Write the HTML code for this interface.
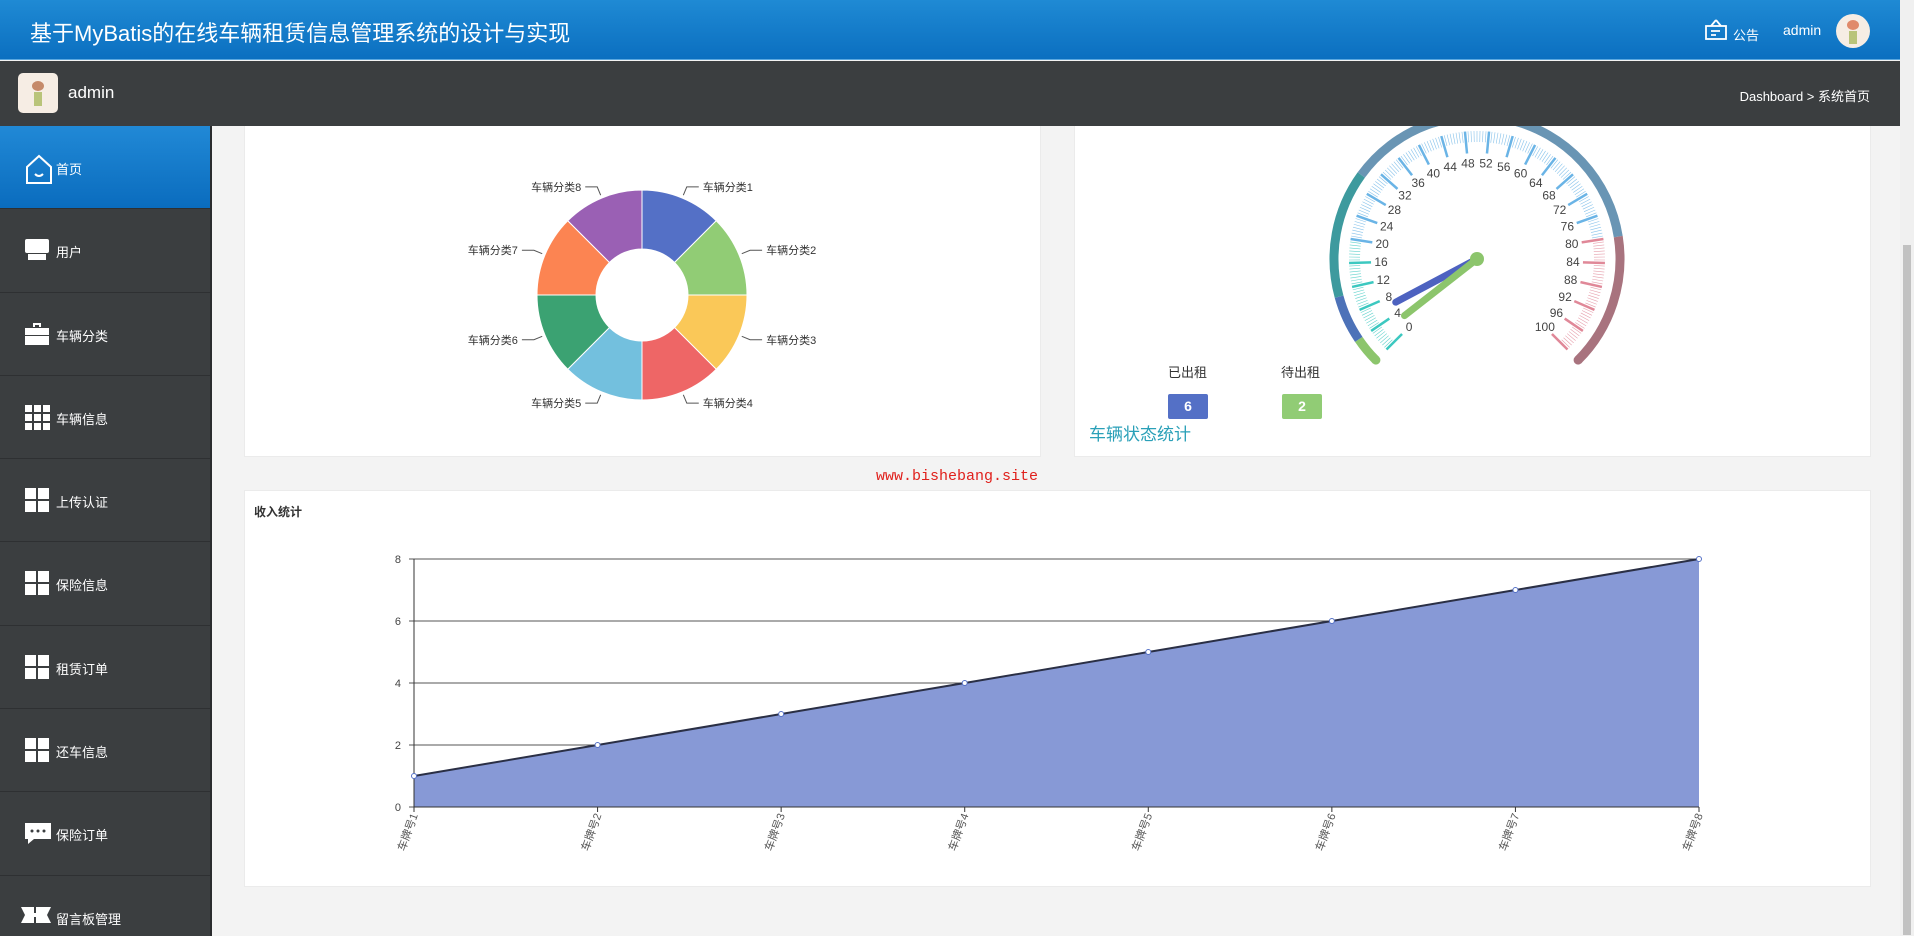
<!DOCTYPE html>
<html style="overflow:hidden;height:936px"><head><meta charset="utf-8">
<style>
*{margin:0;padding:0;box-sizing:border-box}
body{width:1914px;height:936px;overflow:hidden;background:#f3f3f3;font-family:"Liberation Sans","Noto Sans CJK SC",sans-serif;position:relative}
.top{position:absolute;left:0;top:0;width:1900px;height:60px;background:linear-gradient(#1f8ad4,#0b6fc0);border-bottom:1px solid #5aa8e0;z-index:5}
.top .t{position:absolute;left:30px;top:16px;color:#fff;font-size:22px}
.bar{position:absolute;left:0;top:61px;width:1900px;height:65px;background:#3b3e40;z-index:5}
.side{position:absolute;left:0;top:126px;width:212px;height:810px;overflow:hidden;background:#3b3e40;border-right:2px solid #2a2c2e;z-index:5}
.item{height:83.3px;border-bottom:1px solid #2e3032;position:relative;color:#fff;font-size:13px}
.item span{position:absolute;left:56px;top:33px}
.item svg{position:absolute;left:24px;top:28px}
.item.act{background:linear-gradient(#2189d6,#0a6cbe)}
.card{position:absolute;background:#fff;border:1px solid #ebebeb}
.sb{position:absolute;right:0;top:0;width:14px;height:936px;background:#f0f0f0;z-index:6}
.sb div{position:absolute;left:3px;top:245px;width:8px;height:690px;background:#c1c1c1}
</style></head><body>
<div class="top"><div class="t">基于MyBatis的在线车辆租赁信息管理系统的设计与实现</div>
<svg style="position:absolute;left:1704px;top:18px" width="24" height="24" viewBox="0 0 24 24" fill="none" stroke="#fff" stroke-width="1.8"><path d="M12 2 L7 8 M12 2 L17 8"/><rect x="2" y="8" width="20" height="13"/><path d="M7 13h9M7 17h5"/></svg>
<div style="position:absolute;left:1733px;top:25px;color:#fff;font-size:13px">公告</div>
<div style="position:absolute;left:1783px;top:22px;color:#fff;font-size:14px">admin</div>
<div style="position:absolute;left:1836px;top:14px;width:34px;height:34px;border-radius:50%;background:#f6ede4;overflow:hidden"><div style="position:absolute;left:11px;top:6px;width:12px;height:10px;border-radius:50%;background:#e08a6a"></div><div style="position:absolute;left:13px;top:17px;width:8px;height:13px;background:#b9c47a"></div></div>
</div>
<div class="bar">
<div style="position:absolute;left:18px;top:12px;width:40px;height:40px;border-radius:5px;background:#f6ede4"><div style="position:absolute;left:14px;top:8px;width:12px;height:10px;border-radius:50%;background:#c58a6a"></div><div style="position:absolute;left:16px;top:19px;width:8px;height:14px;background:#b9c47a"></div></div>
<div style="position:absolute;left:68px;top:22px;color:#fff;font-size:17px">admin</div>
<div style="position:absolute;right:30px;top:25px;color:#fff;font-size:13px">Dashboard &gt; 系统首页</div>
</div>
<div class="side">
<div class="item act"><svg width="30" height="32" viewBox="0 0 30 32" fill="none" stroke="#fff" stroke-width="2"><path d="M3 13 L15 2 L27 13 V29 H3 Z"/><path d="M11 20 q4 4 8 0"/></svg><span>首页</span></div>
<div class="item"><svg width="26" height="26" viewBox="0 0 26 26" fill="#fff"><rect x="1" y="2" width="24" height="14" rx="2"/><rect x="4" y="17" width="18" height="6"/></svg><span>用户</span></div>
<div class="item"><svg width="26" height="26" viewBox="0 0 26 26" fill="#fff"><path d="M9 2h8v4h-2V4h-4v2H9z"/><rect x="1" y="7" width="24" height="7"/><rect x="1" y="15" width="24" height="9"/></svg><span>车辆分类</span></div>
<div class="item"><svg width="26" height="26" viewBox="0 0 26 26" fill="#fff"><rect x="1" y="1" width="7" height="7"/><rect x="10" y="1" width="7" height="7"/><rect x="19" y="1" width="7" height="7"/><rect x="1" y="10" width="7" height="7"/><rect x="10" y="10" width="7" height="7"/><rect x="19" y="10" width="7" height="7"/><rect x="1" y="19" width="7" height="7"/><rect x="10" y="19" width="7" height="7"/><rect x="19" y="19" width="7" height="7"/></svg><span>车辆信息</span></div>
<div class="item"><svg width="26" height="26" viewBox="0 0 26 26" fill="#fff"><rect x="1" y="1" width="11" height="11"/><rect x="14" y="1" width="11" height="11"/><rect x="1" y="14" width="11" height="11"/><rect x="14" y="14" width="11" height="11"/></svg><span>上传认证</span></div>
<div class="item"><svg width="26" height="26" viewBox="0 0 26 26" fill="#fff"><rect x="1" y="1" width="11" height="11"/><rect x="14" y="1" width="11" height="11"/><rect x="1" y="14" width="11" height="11"/><rect x="14" y="14" width="11" height="11"/></svg><span>保险信息</span></div>
<div class="item"><svg width="26" height="26" viewBox="0 0 26 26" fill="#fff"><rect x="1" y="1" width="11" height="11"/><rect x="14" y="1" width="11" height="11"/><rect x="1" y="14" width="11" height="11"/><rect x="14" y="14" width="11" height="11"/></svg><span>租赁订单</span></div>
<div class="item"><svg width="26" height="26" viewBox="0 0 26 26" fill="#fff"><rect x="1" y="1" width="11" height="11"/><rect x="14" y="1" width="11" height="11"/><rect x="1" y="14" width="11" height="11"/><rect x="14" y="14" width="11" height="11"/></svg><span>还车信息</span></div>
<div class="item"><svg width="28" height="28" viewBox="0 0 28 28" fill="#fff"><path d="M1 3h26v16H10l-6 5v-5H1z"/><circle cx="8" cy="11" r="1.5" fill="#3b3e40"/><circle cx="14" cy="11" r="1.5" fill="#3b3e40"/><circle cx="20" cy="11" r="1.5" fill="#3b3e40"/></svg><span>保险订单</span></div>
<div class="item"><svg style="left:20px" width="32" height="26" viewBox="0 0 32 26" fill="#fff"><path d="M1 3h13v6h2V3h15l-4 8 4 8H16v-6h-2v6H1l4-8z"/></svg><span>留言板管理</span></div>
</div>

<div class="card" style="left:244px;top:120px;width:797px;height:337px;border-top:none"></div>
<div class="card" style="left:1074px;top:120px;width:797px;height:337px;border-top:none"></div>
<div class="card" style="left:244px;top:490px;width:1627px;height:397px"></div>

<svg id="s" style="position:absolute;left:0;top:0;z-index:1" width="1900" height="936" font-family="Liberation Sans, Noto Sans CJK SC, sans-serif"></svg>

<div style="position:absolute;left:876px;top:468px;color:#e0201c;font-family:'Liberation Mono',monospace;font-size:15px">www.bishebang.site</div>
<div style="position:absolute;left:254px;top:503px;font-size:12px;font-weight:bold;color:#333">收入统计</div>
<div style="position:absolute;left:1168px;top:362px;font-size:13px;color:#333">已出租</div>
<div style="position:absolute;left:1281px;top:362px;font-size:13px;color:#333">待出租</div>
<div style="position:absolute;left:1168px;top:394px;width:40px;height:25px;background:#5470c6;border-radius:2px;color:#fff;font-weight:bold;font-size:14px;text-align:center;line-height:25px">6</div>
<div style="position:absolute;left:1282px;top:394px;width:40px;height:25px;background:#91cc75;border-radius:2px;color:#fff;font-weight:bold;font-size:14px;text-align:center;line-height:25px">2</div>
<div style="position:absolute;left:1089px;top:420px;font-size:17px;color:#2aa0b8">车辆状态统计</div>
<div class="sb"><div></div></div>
<script>
var s=document.getElementById('s'),h='';
function P(cx,cy,r,a){a=a*Math.PI/180;return [cx+r*Math.cos(a),cy-r*Math.sin(a)];}
var cx=642,cy=295,R=105,r=46,cols=['#5470c6','#91cc75','#fac858','#ee6666','#73c0de','#3ba272','#fc8452','#9a60b4'];
for(var i=0;i<8;i++){var a1=90-i*45,a2=90-(i+1)*45;var p1=P(cx,cy,R,a1),p2=P(cx,cy,R,a2),q2=P(cx,cy,r,a2),q1=P(cx,cy,r,a1);
h+='<path d="M'+p1+' A'+R+' '+R+' 0 0 1 '+p2+' L'+q2+' A'+r+' '+r+' 0 0 0 '+q1+'Z" fill="'+cols[i]+'" stroke="#fff" stroke-width="1"/>';
var m=(a1+a2)/2,e1=P(cx,cy,R+3,m),e2=P(cx,cy,R+12,m);var right=Math.cos(m*Math.PI/180)>0;var ex=e2[0]+(right?12:-12);
h+='<polyline points="'+e1+' '+e2+' '+ex+','+e2[1]+'" fill="none" stroke="#555" stroke-width="1"/>';
h+='<text x="'+(ex+(right?4:-4))+'" y="'+(e2[1]+4)+'" font-size="11" fill="#333" text-anchor="'+(right?'start':'end')+'">车辆分类'+(i+1)+'</text>';}
var gx=1477,gy=259;
function col(v){return v<20?'#3cc8c0':(v<80?'#6ab4e6':'#e08898');}
function ring(v1,v2,c){var a=P(gx,gy,143,225-2.7*v1),b=P(gx,gy,143,225-2.7*v2);h+='<path d="M'+a+' A143 143 0 '+((v2-v1)*2.7>180?1:0)+' 1 '+b+'" fill="none" stroke="'+c+'" stroke-width="9"/>';}
ring(0,4,'#8cc56c');ring(4,11,'#4d72b8');ring(11,30,'#3d9a9e');ring(30,80,'#6995b4');ring(80,100,'#a8737e');
h+='<circle cx="'+P(gx,gy,143,225)[0]+'" cy="'+P(gx,gy,143,225)[1]+'" r="4.5" fill="#8cc56c"/>';
h+='<circle cx="'+P(gx,gy,143,-45)[0]+'" cy="'+P(gx,gy,143,-45)[1]+'" r="4.5" fill="#a8737e"/>';
for(var v=0;v<=100;v+=0.5){var a=225-2.7*v,big=(v%4==0),o=P(gx,gy,128,a),n=P(gx,gy,big?106:117,a);h+='<line x1="'+o[0]+'" y1="'+o[1]+'" x2="'+n[0]+'" y2="'+n[1]+'" stroke="'+col(v)+'" stroke-width="'+(big?2.5:0.6)+'" opacity="'+(big?1:0.8)+'"/>';
if(big){var t=P(gx,gy,96,a);h+='<text x="'+t[0]+'" y="'+(t[1]+4)+'" font-size="12" fill="#444" text-anchor="middle">'+v+'</text>';}}
var b=P(gx,gy,92,225-2.7*6.3),g=P(gx,gy,92,225-2.7*2.6);
h+='<line x1="'+gx+'" y1="'+gy+'" x2="'+b[0]+'" y2="'+b[1]+'" stroke="#4d62c0" stroke-width="7" stroke-linecap="round"/>';
h+='<line x1="'+gx+'" y1="'+gy+'" x2="'+g[0]+'" y2="'+g[1]+'" stroke="#8cc56c" stroke-width="7" stroke-linecap="round"/>';
h+='<circle cx="'+gx+'" cy="'+gy+'" r="7" fill="#8cc56c"/>';
var x0=414,x1=1699,y0=807,k=31,st=(x1-x0)/7,pts=[];
for(var j=0;j<=8;j+=2){var y=y0-j*k;h+='<line x1="'+(x0-5)+'" y1="'+y+'" x2="'+x1+'" y2="'+y+'" stroke="#555" stroke-width="1"/><text x="'+(x0-13)+'" y="'+(y+4)+'" font-size="11" fill="#444" text-anchor="end">'+j+'</text>';}
for(var i=0;i<8;i++)pts.push((x0+i*st)+','+(y0-(i+1)*k));
h+='<polygon points="'+x0+','+y0+' '+pts.join(' ')+' '+x1+','+y0+'" fill="#8799d6"/>';
h+='<polyline points="'+pts.join(' ')+'" fill="none" stroke="#2a2f45" stroke-width="2"/>';
h+='<line x1="'+x0+'" y1="'+(y0-8*k)+'" x2="'+x0+'" y2="'+y0+'" stroke="#333"/><line x1="'+x0+'" y1="'+y0+'" x2="'+x1+'" y2="'+y0+'" stroke="#333"/>';
for(var i=0;i<8;i++){var x=x0+i*st;h+='<circle cx="'+x+'" cy="'+(y0-(i+1)*k)+'" r="2.5" fill="#fff" stroke="#5470c6"/><line x1="'+x+'" y1="'+y0+'" x2="'+x+'" y2="'+(y0+5)+'" stroke="#333"/>';
h+='<text transform="translate('+(x+4)+','+(y0+8)+') rotate(-70)" font-size="11" fill="#555" text-anchor="end">车牌号'+(i+1)+'</text>';}
s.innerHTML=h;
</script>
</body></html>
